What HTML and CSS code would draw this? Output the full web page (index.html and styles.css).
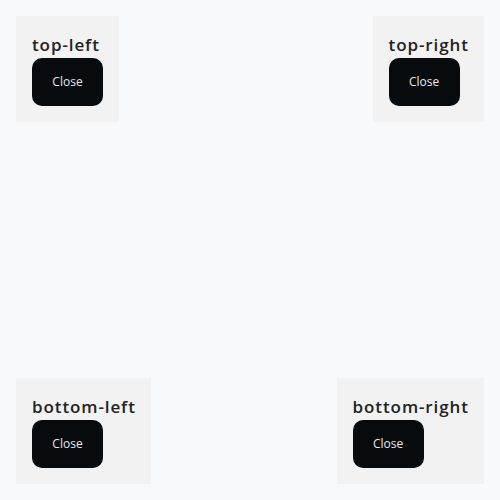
FILE: index.html
```html
<!DOCTYPE html>
<html>
<head>
<meta charset="utf-8">
<link rel="stylesheet" href="styles.css">
</head>
<body>
<div class="page">
  <div class="row">
    <div class="toast"><div class="title">top-left</div><button class="close">Close</button></div>
    <div class="toast"><div class="title">top-right</div><button class="close">Close</button></div>
  </div>
  <div class="row">
    <div class="toast"><div class="title">bottom-left</div><button class="close">Close</button></div>
    <div class="toast"><div class="title">bottom-right</div><button class="close">Close</button></div>
  </div>
</div>
</body>
</html>
```
FILE: styles.css
```css
html, body {
  margin: 0;
  padding: 0;
  background: #f8f9fb;
}
.page {
  box-sizing: border-box;
  width: 500px;
  height: 500px;
  padding: 16px;
  display: flex;
  flex-direction: column;
  justify-content: space-between;
}
.row {
  display: flex;
  justify-content: space-between;
  align-items: flex-start;
}
.toast {
  background: #f2f2f2;
  padding: 16px;
  display: flex;
  flex-direction: column;
  align-items: flex-start;
}
.title {
  font-family: "Open Sans", sans-serif;
  font-weight: 600;
  font-size: 17px;
  line-height: 26px;
  letter-spacing: 0.9px;
  color: #222326;
  margin-right: -0.9px;
}
.close {
  font-family: "Open Sans", sans-serif;
  font-size: 12px;
  line-height: 16px;
  color: #e8e8e8;
  background: #070b0e;
  border: none;
  border-radius: 10px;
  width: 71px;
  height: 48px;
  padding: 0;
}
```
